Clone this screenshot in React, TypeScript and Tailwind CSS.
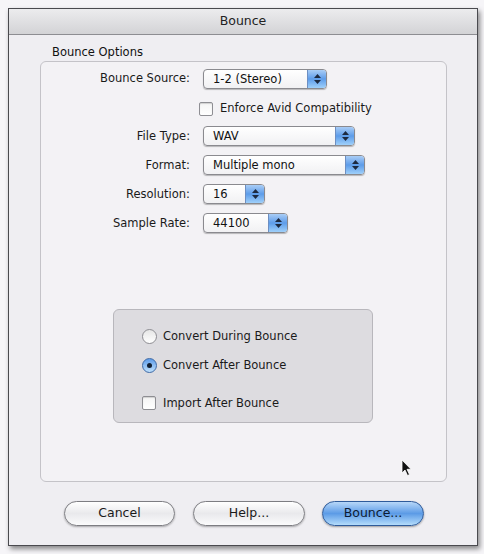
import React from 'react';

const font = { fontFamily: '"Lucida Grande", "DejaVu Sans", sans-serif' };

function Popup({ value, width }: { value: string; width: string }) {
  return (
    <div
      className={`flex h-[20px] ${width} items-stretch overflow-hidden rounded-[4px] border border-[#8a8a8f] bg-gradient-to-b from-[#ffffff] to-[#f1f1f3] shadow-[0_1px_1px_rgba(0,0,0,0.25)]`}
    >
      <span className="flex-1 pl-[9px] text-[11.5px] leading-[18px] text-[#111]">{value}</span>
      <span className="flex w-[19px] flex-col items-center justify-center gap-[2px] border-l border-[#6d8fc2] bg-gradient-to-b from-[#a9cdf6] via-[#5d9ce9] to-[#9fd0fa]">
        <svg width="7" height="4" viewBox="0 0 7 4"><path d="M0 4 L3.5 0 L7 4 Z" fill="#1d2a40" /></svg>
        <svg width="7" height="4" viewBox="0 0 7 4"><path d="M0 0 L3.5 4 L7 0 Z" fill="#1d2a40" /></svg>
      </span>
    </div>
  );
}

function Checkbox() {
  return (
    <span className="inline-block h-[14px] w-[14px] rounded-[2px] border border-[#8e8e93] bg-gradient-to-b from-[#f4f4f4] to-[#ffffff] shadow-[inset_0_1px_1px_rgba(0,0,0,0.15)]" />
  );
}

function Radio({ on }: { on?: boolean }) {
  if (on) {
    return (
      <span className="flex h-[15px] w-[15px] items-center justify-center rounded-full border border-[#3e6aa6] bg-gradient-to-b from-[#5d9ce9] to-[#bfe0fb]">
        <span className="h-[5px] w-[5px] rounded-full bg-[#122033]" />
      </span>
    );
  }
  return (
    <span className="inline-block h-[15px] w-[15px] rounded-full border border-[#8e8e93] bg-gradient-to-b from-[#e6e6e6] to-[#ffffff]" />
  );
}

function Row({ label, children, className = '' }: { label: string; children: React.ReactNode; className?: string }) {
  return (
    <div className={`flex items-center ${className}`}>
      <span className="w-[150px] pr-[1px] text-right text-[11.5px] text-[#1a1a1a]">{label}</span>
      <div className="ml-[12px]">{children}</div>
    </div>
  );
}

export default function App() {
  return (
    <div className="h-[554px] w-[484px] bg-[#f6f5f8] pl-[8px] pt-[8px]" style={font}>
      <div className="flex h-[538px] w-[470px] flex-col border border-[#4a4a4f] bg-[#efeef2] shadow-[2px_3px_5px_rgba(0,0,0,0.45)]">
        <div className="flex h-[26px] items-center justify-center border-b border-[#8d8d92] bg-gradient-to-b from-[#ececee] to-[#d3d3d6] text-[12.5px] text-[#222]">
          Bounce
        </div>

        <div className="pl-[43px] pt-[10px] text-[11.5px] leading-[14px] text-[#111]">Bounce Options</div>

        <div className="relative ml-[31px] mt-[2px] h-[421px] w-[407px] rounded-[6px] border border-[#c4c3c8] bg-[#f3f2f5]">
          <div className="pt-[7px]">
            <Row label="Bounce Source:">
              <Popup value="1-2 (Stereo)" width="w-[124px]" />
            </Row>
            <div className="mt-[11px] flex items-center pl-[158px]">
              <Checkbox />
              <span className="ml-[7px] text-[11.5px] text-[#1a1a1a]">Enforce Avid Compatibility</span>
            </div>
            <Row label="File Type:" className="mt-[9px]">
              <Popup value="WAV" width="w-[152px]" />
            </Row>
            <Row label="Format:" className="mt-[9px]">
              <Popup value="Multiple mono" width="w-[162px]" />
            </Row>
            <Row label="Resolution:" className="mt-[9px]">
              <Popup value="16" width="w-[62px]" />
            </Row>
            <Row label="Sample Rate:" className="mt-[9px]">
              <Popup value="44100" width="w-[85px]" />
            </Row>
          </div>

          <div className="ml-[72px] mt-[76px] flex h-[114px] w-[260px] flex-col rounded-[6px] border border-[#b8b7bc] bg-[#dddce0] pl-[28px] pt-[18px]">
            <div className="flex items-center">
              <Radio />
              <span className="ml-[6px] text-[11.5px] text-[#1a1a1a]">Convert During Bounce</span>
            </div>
            <div className="mt-[11px] flex items-center">
              <Radio on />
              <span className="ml-[6px] text-[11.5px] text-[#1a1a1a]">Convert After Bounce</span>
            </div>
            <div className="mt-[21px] flex items-center">
              <Checkbox />
              <span className="ml-[7px] text-[11.5px] text-[#1a1a1a]">Import After Bounce</span>
            </div>
          </div>

          <svg className="absolute left-[360px] top-[397px]" width="12" height="18" viewBox="0 0 12 18">
            <path d="M1 1 L1 14 L4 11 L6.5 16.5 L8.5 15.6 L6 10.3 L10 10.3 Z" fill="#111" stroke="#fff" strokeWidth="0.8" />
          </svg>
        </div>

        <div className="mt-[19px] flex pl-[55px]">
          <button className="h-[25px] w-[111px] rounded-full border border-[#7d7d82] bg-gradient-to-b from-[#ffffff] via-[#e9e9ec] to-[#fbfbfc] text-[12.5px] text-[#1a1a1a] shadow-[0_1px_2px_rgba(0,0,0,0.3)]">
            Cancel
          </button>
          <button className="ml-[18px] h-[25px] w-[112px] rounded-full border border-[#7d7d82] bg-gradient-to-b from-[#ffffff] via-[#e9e9ec] to-[#fbfbfc] text-[12.5px] text-[#1a1a1a] shadow-[0_1px_2px_rgba(0,0,0,0.3)]">
            Help...
          </button>
          <button className="ml-[17px] h-[25px] w-[102px] rounded-full border border-[#2f5b9a] bg-gradient-to-b from-[#b7d7f8] via-[#5c9be6] to-[#b4dcfb] text-[12.5px] text-[#0d1b33] shadow-[0_1px_2px_rgba(0,0,0,0.35)]">
            Bounce...
          </button>
        </div>
      </div>
    </div>
  );
}
